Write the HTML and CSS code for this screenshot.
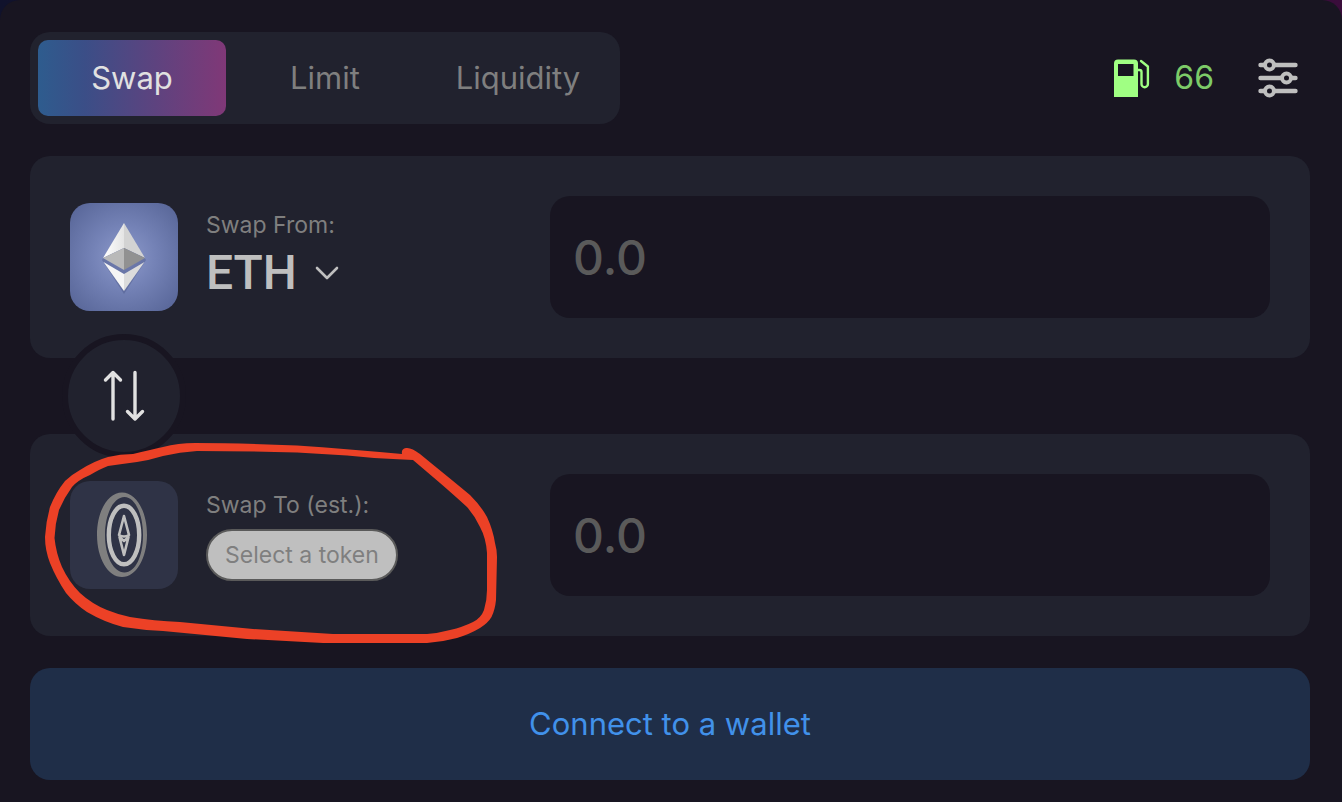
FILE: index.html
```html
<!DOCTYPE html>
<html lang="en">
<head>
<meta charset="utf-8">
<title>Swap</title>
<meta name="viewport" content="width=device-width, initial-scale=1">
<link rel="stylesheet" href="styles.css">
</head>
<body>
<main class="panel">
  <header class="topbar">
    <nav class="tabs" aria-label="Trade type">
      <button class="tab tab-active" type="button">Swap</button>
      <button class="tab" type="button">Limit</button>
      <button class="tab" type="button">Liquidity</button>
    </nav>
    <div class="tools">
      <div class="gas">
        <svg class="gas-icon" width="36" height="40" viewBox="0 0 36 40" aria-hidden="true">
          <path fill="#a0ff83" fill-rule="evenodd" d="M4 1.500h16a4 4 0 0 1 4 4V39H0V5.500a4 4 0 0 1 4-4zM4 6v12h15.500V6z"/>
          <path fill="none" stroke="#a0ff83" stroke-width="2.400" stroke-linejoin="round" stroke-linecap="round" d="M24 12h1.500a2 2 0 0 1 2 2v12a3.200 3.200 0 0 0 6.400 0V8.500L27 3"/>
        </svg>
        <span class="gas-value">66</span>
      </div>
      <button class="settings" type="button" aria-label="Settings">
        <svg width="40" height="40" viewBox="0 0 40 40" aria-hidden="true">
          <path stroke="#bfbfbf" stroke-width="4.400" stroke-linecap="round" d="M2.500 7h35M2.500 20h35M2.500 33h35"/>
          <g fill="#181521" stroke="#bfbfbf" stroke-width="4">
            <circle cx="11.500" cy="7" r="4.500"/>
            <circle cx="28.500" cy="20" r="4.500"/>
            <circle cx="11.500" cy="33" r="4.500"/>
          </g>
        </svg>
      </button>
    </div>
  </header>

  <section class="card">
    <div class="side">
      <svg class="token" width="108" height="108" viewBox="0 0 108 108" aria-hidden="true">
        <defs>
          <radialGradient id="glow" r="0.650">
            <stop offset="0" stop-color="#8d9acb"/>
            <stop offset="0.450" stop-color="#7482b6"/>
            <stop offset="1" stop-color="#596799"/>
          </radialGradient>
          <linearGradient id="facet" x1="0" y1="0" x2="1" y2="0">
            <stop offset="0" stop-color="#ffffff"/>
            <stop offset="1" stop-color="#e4e4e4"/>
          </linearGradient>
        </defs>
        <rect width="108" height="108" fill="url(#glow)"/>
        <path fill="#3f4b7a" opacity="0.350" d="M54 22L76 57 54 91 32 57z"/>
        <path fill="url(#facet)" d="M54 20v25L33 55z"/>
        <path fill="#d3d3d3" d="M54 20v25l21 10z"/>
        <path fill="#b9b9b9" d="M54 45v22L33 55z"/>
        <path fill="#919191" d="M54 45v22l21-12z"/>
        <path fill="#f5f5f5" d="M33.500 59L54 71v17z"/>
        <path fill="#dcdcdc" d="M74.500 59L54 71v17z"/>
      </svg>
      <div class="choice">
        <label class="caption" for="from-amount">Swap From:</label>
        <button class="symbol" type="button">ETH
          <svg width="24" height="16" viewBox="0 0 24 16" aria-hidden="true">
            <path fill="none" stroke="#bfbfbf" stroke-width="2.600" stroke-linecap="round" stroke-linejoin="round" d="M2 3l10 10L22 3"/>
          </svg>
        </button>
      </div>
    </div>
    <input class="amount" id="from-amount" type="text" inputmode="decimal" placeholder="0.0">
  </section>

  <button class="flip" type="button" aria-label="Switch tokens">
    <svg width="42" height="52" viewBox="0 0 42 52" aria-hidden="true">
      <path fill="none" stroke="#e1e1e1" stroke-width="3.400" stroke-linecap="round" stroke-linejoin="round" d="M10 49V2.500M2.500 10L10 2.500 17.500 10M32 2.500V49M24.500 41.500L32 49l7.500-7.500"/>
    </svg>
  </button>

  <section class="card">
    <div class="side">
      <svg class="token token-empty" width="108" height="108" viewBox="0 0 108 108" aria-hidden="true">
        <path fill="#7f7f7f" fill-rule="evenodd" d="M52 11.500c14 0 25 18.500 25 42.200S66 96 52 96 27 77.500 27 53.700 38 11.500 52 11.500zM54.500 16C43.500 16 35 33 35 54s8.500 37.500 19.500 37.500S73 75 73 54 65 16 54.500 16z"/>
        <ellipse cx="54" cy="54" rx="15.200" ry="29.200" fill="none" stroke="#bfbfbf" stroke-width="4.400"/>
        <path fill="none" stroke="#bfbfbf" stroke-width="2.600" stroke-linejoin="round" d="M54 35l-5 19q5 3 10 0zM49.500 56L54 74l4.500-18L54 60z"/>
      </svg>
      <div class="choice choice-spaced">
        <label class="caption" for="to-amount">Swap To (est.):</label>
        <button class="pill" type="button">Select a token</button>
      </div>
    </div>
    <input class="amount" id="to-amount" type="text" inputmode="decimal" placeholder="0.0">
    <svg class="scribble" width="470" height="220" viewBox="40 434 470 220" aria-hidden="true">
      <path fill="#ec4126" fill-rule="evenodd" d="M195 443Q240 443 297 445.500Q347 449 402 454Q401 449 406 448Q411 447 420 454L434 465.500Q458 485 470 495Q481 506 487 517Q493 530 495 543Q497 550 497 557L496 600Q495 610 491.500 617Q488 623 480 628Q470 634 457 638Q442 642 427 643L323 643L247 639L163 631Q142 630 123 627Q104 622 87 612Q75 604 66 593Q56 578 50 563Q45 550 45 537Q46 521 50 507Q56 492 65 481Q71 475 80 470Q94 461 108 457Q120 454 133 454Q150 450 163 447Q178 443 195 443ZM197 451Q180 452 163 456Q150 460 137 462Q122 464 108 466Q100 469 90 475Q78 480 72 487Q64 498 59 510Q55 524 54.500 538Q56 553 62 567Q69 582 80 593Q92 604 107 610Q118 614.500 130 617Q154 621 180 622L253 629L333 634L427 634Q439 633 450 630Q463 627 473 622Q481 618 484 610Q487 600 487 590L487 553Q486 538 480 527Q475 516 467 507Q455 496 440 483L413 460L393 459Q370 458 347 455.500L297 452.500Q240 451 197 451Z"/>
    </svg>
  </section>

  <button class="connect" type="button">Connect to a wallet</button>
</main>
</body>
</html>
```
FILE: styles.css
```css
* {
  box-sizing: border-box;
}

body {
  margin: 0;
  min-height: 100vh;
  background: linear-gradient(90deg, #10122c, #3a0d3b);
  font-family: Inter, "Liberation Sans", sans-serif;
  color: #bfbfbf;
}

button,
input {
  font: inherit;
  color: inherit;
  border: 0;
  padding: 0;
  margin: 0;
}

button {
  background: none;
  cursor: pointer;
}

svg {
  display: block;
}

.panel {
  display: flex;
  flex-direction: column;
  min-height: 100vh;
  padding: 32px 32px 22px 30px;
  border-radius: 20px 20px 0 0;
  background: #181521;
}

.topbar {
  display: flex;
  align-items: center;
  justify-content: space-between;
  margin-bottom: 32px;
}

.tabs {
  display: grid;
  grid-template-columns: repeat(3, 188px);
  gap: 5px;
  padding: 8px;
  border-radius: 20px;
  background: #21222e;
}

.tab {
  height: 76px;
  padding-bottom: 2px;
  border-radius: 10px;
  font-size: 31px;
  color: #7f7f7f;
}

.tab-active {
  background: linear-gradient(90deg, #2e5c8e, #3b4e87 25%, #803877);
  color: #e1e1e1;
}

.tools {
  display: flex;
  align-items: center;
  gap: 44px;
  padding-right: 12px;
}

.gas {
  display: flex;
  align-items: center;
  gap: 24px;
}

.gas-value {
  padding-bottom: 2px;
  font-size: 32px;
  color: #7dcb68;
}

.card {
  position: relative;
  display: flex;
  align-items: center;
  padding: 40px;
  border-radius: 20px;
  background: #21222e;
}

.side {
  display: flex;
  flex: 1;
  align-items: center;
  gap: 28px;
}

.token {
  flex: none;
  border-radius: 20px;
}

.token-empty {
  background: #2f3346;
}

.choice {
  display: flex;
  flex-direction: column;
  align-items: flex-start;
}

.choice-spaced {
  gap: 8px;
}

.caption {
  font-size: 23px;
  line-height: 32px;
  color: #7f7f7f;
}

.symbol {
  display: flex;
  align-items: center;
  gap: 18px;
  font-family: Roboto, "Liberation Sans", sans-serif;
  font-size: 48px;
  font-weight: 500;
  line-height: 64px;
}

.pill {
  height: 52px;
  padding: 0 17px;
  border: 2px solid #5a5a5a;
  border-radius: 26px;
  background: #bfbfbf;
  font-size: 23px;
  color: #7f7f7f;
}

.amount {
  flex: none;
  width: 60%;
  height: 122px;
  padding: 0 23px;
  border-radius: 20px;
  background: #181521;
  font-size: 48px;
  font-weight: 500;
}

.amount::placeholder {
  color: #5a5a5a;
  opacity: 1;
}

.flip {
  position: relative;
  z-index: 1;
  display: grid;
  place-items: center;
  width: 124px;
  height: 124px;
  margin: -24px 0 -24px 32px;
  border: 6px solid #181521;
  border-radius: 50%;
  background: #21222e;
}

.scribble {
  position: absolute;
  z-index: 2;
  top: 0;
  left: 10px;
  pointer-events: none;
}

.connect {
  height: 112px;
  margin-top: 32px;
  padding-bottom: 2px;
  border-radius: 20px;
  background: #1f2e48;
  font-size: 31px;
  color: #4191ea;
}
```
